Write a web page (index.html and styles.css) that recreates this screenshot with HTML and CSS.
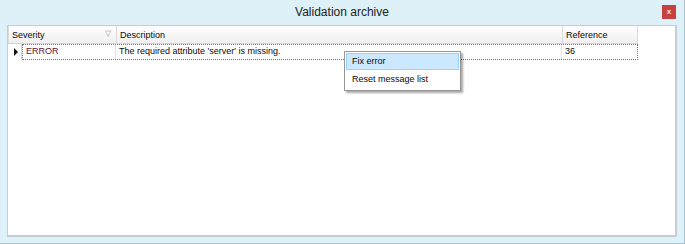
FILE: index.html
```html
<!DOCTYPE html>
<html lang="en">
<head>
    <meta charset="UTF-8" />
    <title>Validation archive</title>
    <link rel="stylesheet" href="styles.css">
</head>
<body>
<div class="janela">
    <div class="titulo">
        <span class="titulo-texto">Validation archive</span>
        <button class="btn-fechar">x</button>
    </div>
    <div class="conteudo">
        <div class="grade">
            <div class="cabecalho">
                <div class="cel canto"></div>
                <div class="cel col-sev">Severity <span class="filtro">&#9661;</span></div>
                <div class="cel col-desc">Description</div>
                <div class="cel col-ref">Reference</div>
            </div>
            <div class="linha">
                <div class="cel canto"><span class="seta"></span></div>
                <div class="selecao">
                    <div class="cel col-sev texto-erro">ERROR</div>
                    <div class="cel col-desc">The required attribute 'server' is missing.</div>
                    <div class="cel col-ref">36</div>
                </div>
            </div>
        </div>
        <ul class="menu">
            <li class="ativo">Fix error</li>
            <li>Reset message list</li>
        </ul>
    </div>
</div>
</body>
</html>
```

FILE: styles.css
```css
:root {
    --fundo-janela: #def1f8;
    --borda-janela: #a9c3cf;
    --borda-conteudo: #c3cdd2;
    --texto: #0a0a0a;
    --linha-grade: #d6d6d6;
}

html, body {
    margin: 0;
    height: 100%;
}

body {
    font-family: 'Liberation Sans', Arial, sans-serif;
    font-size: 9px;
    color: var(--texto);
    background: #fff;
}

.janela {
    height: 244px;
    box-sizing: border-box;
    background: var(--fundo-janela);
    border-right: 1px solid var(--borda-janela);
    border-bottom: 1px solid var(--borda-janela);
    display: flex;
    flex-direction: column;
    padding: 0 7px 6px 7px;
}

.titulo {
    height: 25px;
    display: flex;
    align-items: center;
    justify-content: center;
    position: relative;
}

.titulo-texto {
    font-size: 12px;
    color: #222;
    margin-top: -1px;
}

.btn-fechar {
    position: absolute;
    right: 1px;
    top: 5px;
    width: 14px;
    height: 14px;
    padding: 0;
    border: none;
    background: #c8403f;
    color: #fbe6e6;
    font-family: 'Liberation Sans', Arial, sans-serif;
    font-size: 8px;
    font-weight: 700;
    line-height: 12px;
}

.conteudo {
    flex: 1;
    background: #fff;
    border: 1px solid var(--borda-conteudo);
    border-right-width: 2px;
    border-bottom-width: 2px;
    position: relative;
}

.grade {
    width: 630px;
}

.cabecalho, .linha {
    display: flex;
}

.cabecalho {
    height: 17px;
    background: linear-gradient(#ffffff, #efefef);
    border-bottom: 1px solid var(--linha-grade);
}

.cabecalho .cel {
    border-right: 1px solid #dcdcdc;
    line-height: 18px;
}

.cel {
    box-sizing: border-box;
    padding-left: 3px;
    white-space: nowrap;
    overflow: hidden;
}

.canto {
    width: 1px;
    padding: 0;
}

.col-sev {
    width: 108px;
    position: relative;
}

.col-desc {
    width: 446px;
}

.col-ref {
    width: 75px;
}

.filtro {
    position: absolute;
    right: 5px;
    top: -1px;
    color: #9a9a9a;
    font-size: 8px;
}

.linha {
    height: 16px;
}

.linha .canto {
    width: 14px;
    display: flex;
    align-items: center;
    justify-content: center;
    border-right: 1px solid var(--linha-grade);
}

.seta {
    width: 0;
    height: 0;
    border-top: 4px solid transparent;
    border-bottom: 4px solid transparent;
    border-left: 4px solid #111;
    margin-left: 3px;
}

.selecao {
    display: flex;
    border: 1px dotted #777;
    box-sizing: border-box;
    height: 16px;
    flex: 1;
}

.selecao .cel {
    line-height: 13px;
    border-right: 1px solid #e2e2e2;
}

.selecao .col-sev {
    width: 93px;
}

.selecao .col-ref {
    border-right: none;
}

.texto-erro {
    color: #5e1232;
}

.menu {
    position: absolute;
    left: 336px;
    top: 25px;
    width: 113px;
    margin: 0;
    padding: 1px;
    list-style: none;
    background: #fff;
    border: 1px solid #979797;
    box-shadow: 2px 2px 2px rgba(0, 0, 0, 0.35);
}

.menu li {
    height: 15px;
    line-height: 15px;
    padding-left: 5px;
    border: 1px solid transparent;
    margin-bottom: 1px;
}

.menu li.ativo {
    background: #cce8ff;
    border-color: #99d1ff;
}
```
